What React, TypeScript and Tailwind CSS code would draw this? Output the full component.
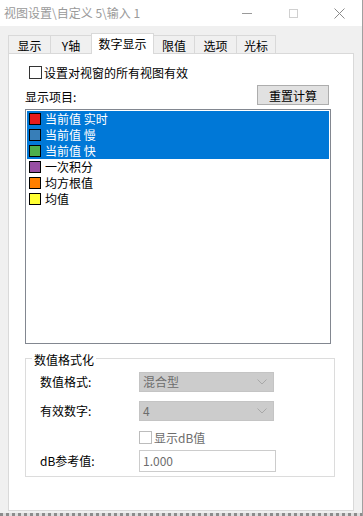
import React from "react";

const items = [
  { name: "当前值 实时", sw: "bg-[#e41a1c]", sel: true },
  { name: "当前值 慢", sw: "bg-[#377eb8]", sel: true },
  { name: "当前值 快", sw: "bg-[#4daf4a]", sel: true },
  { name: "一次积分", sw: "bg-[#984ea3]", sel: false },
  { name: "均方根值", sw: "bg-[#ff7f00]", sel: false },
  { name: "均值", sw: "bg-[#ffff33]", sel: false },
];

function Chevron() {
  return (
    <svg width="10" height="6" viewBox="0 0 10 6">
      <polyline points="0.5,0.5 5,5 9.5,0.5" fill="none" stroke="#a8a8a8" strokeWidth="1" />
    </svg>
  );
}

export default function App() {
  return (
    <div className="w-[363px] h-[516px] bg-[#f0f0f0] flex flex-col border-r border-[#a0a0a0] font-['Noto_Sans_CJK_SC',sans-serif] text-[12px] text-black overflow-hidden">
      {/* title bar */}
      <div className="h-[26px] bg-white flex items-center shrink-0">
        <span className="ml-[4px] text-[#9a9a9a] leading-[16px] whitespace-pre">视图设置\自定义 5\输入 1</span>
        <div className="flex-1" />
        <div className="w-[46px] h-[26px] flex items-center justify-center">
          <div className="w-[10px] h-px bg-[#9a9a9a]" />
        </div>
        <div className="w-[46px] h-[26px] flex items-center justify-center">
          <div className="w-[9px] h-[9px] border border-[#d0d0d0]" />
        </div>
        <div className="w-[46px] h-[26px] flex items-center justify-center">
          <svg width="11" height="11" viewBox="0 0 11 11">
            <line x1="0.5" y1="0.5" x2="10.5" y2="10.5" stroke="#8a8a8a" strokeWidth="1" />
            <line x1="10.5" y1="0.5" x2="0.5" y2="10.5" stroke="#8a8a8a" strokeWidth="1" />
          </svg>
        </div>
      </div>

      {/* tabs */}
      <div className="mt-[7px] ml-[8px] h-[20px] flex items-end shrink-0">
        <div className="w-[42px] h-[18px] border-l border-t border-[#d9d9d9] flex justify-center pt-[2px] leading-[16px]">显示</div>
        <div className="w-[41px] h-[18px] border-l border-t border-[#d9d9d9] flex justify-center pt-[2px] leading-[16px]">Y轴</div>
        <div className="relative z-10 w-[63px] h-[21px] mb-[-1px] bg-white border-l border-t border-r border-[#d9d9d9] flex justify-center pt-[2px] leading-[16px]">数字显示</div>
        <div className="w-[40px] h-[18px] border-t border-[#d9d9d9] flex justify-center pt-[2px] leading-[16px]">限值</div>
        <div className="w-[42px] h-[18px] border-l border-t border-[#d9d9d9] flex justify-center pt-[2px] leading-[16px]">选项</div>
        <div className="w-[40px] h-[18px] border-l border-t border-r border-[#d9d9d9] flex justify-center pt-[2px] leading-[16px]">光标</div>
      </div>

      {/* panel */}
      <div className="ml-[8px] w-[346px] h-[458px] bg-white border border-[#d9d9d9] pl-[16px] flex flex-col shrink-0">
        <div className="mt-[11px] ml-[4px] h-[15px] flex items-center">
          <div className="w-[13px] h-[13px] border border-[#333333] bg-white" />
          <span className="ml-[2px] leading-[15px]">设置对视窗的所有视图有效</span>
        </div>

        <div className="mt-[5px] w-[306px] h-[20px] flex items-center justify-between">
          <span className="leading-[16px] pt-[4px]">显示项目:</span>
          <div className="mr-[2px] w-[72px] h-[20px] bg-[#e1e1e1] border border-[#adadad] flex items-center justify-center leading-[16px] pt-[1px]">
            重置计算
          </div>
        </div>

        <div className="mt-[4px] w-[306px] h-[235px] border border-[#828790] p-[1px] flex flex-col">
          {items.map((it) => (
            <div
              key={it.name}
              className={
                it.sel
                  ? "h-[16px] flex items-center bg-[#0078d7] text-white"
                  : "h-[16px] flex items-center text-black"
              }
            >
              <div className={"ml-[2px] w-[12px] h-[12px] border border-black " + it.sw} />
              <span className="ml-[4px] leading-[16px] whitespace-pre">{it.name}</span>
            </div>
          ))}
        </div>

        <div className="relative mt-[14px] w-[310px] h-[119px] border border-[#dcdcdc] pt-[13px] pl-[14px] flex flex-col">
          <span className="absolute left-[6px] top-[-7px] bg-white px-[2px] leading-[15px]">数值格式化</span>

          <div className="h-[20px] flex items-center">
            <span className="w-[99px] leading-[16px]">数值格式:</span>
            <div className="w-[135px] h-[20px] bg-[#cccccc] border border-[#c4c4c4] flex items-center justify-between pl-[3px] pr-[6px] text-[#6d6d6d] leading-[16px]">
              <span>混合型</span>
              <Chevron />
            </div>
          </div>

          <div className="mt-[9px] h-[20px] flex items-center">
            <span className="w-[99px] leading-[16px]">有效数字:</span>
            <div className="w-[135px] h-[20px] bg-[#cccccc] border border-[#c4c4c4] flex items-center justify-between pl-[3px] pr-[6px] text-[#6d6d6d] leading-[16px]">
              <span>4</span>
              <Chevron />
            </div>
          </div>

          <div className="mt-[9px] h-[15px] flex items-center pl-[99px]">
            <div className="w-[13px] h-[13px] border border-[#bcbcbc] bg-white" />
            <span className="ml-[2px] leading-[15px] text-[#6d6d6d]">显示dB值</span>
          </div>

          <div className="mt-[5px] h-[22px] flex items-center">
            <span className="w-[99px] leading-[16px]">dB参考值:</span>
            <div className="w-[137px] h-[22px] bg-white border border-[#cccccc] flex items-center pl-[3px] text-[#6d6d6d] leading-[16px]">
              1.000
            </div>
          </div>
        </div>
      </div>

      <div className="flex-1" />
      <div className="h-[3px] shrink-0 bg-[repeating-linear-gradient(90deg,#8c8c8c_0px,#8c8c8c_3px,#dcdcdc_3px,#dcdcdc_6px)]" />
    </div>
  );
}
